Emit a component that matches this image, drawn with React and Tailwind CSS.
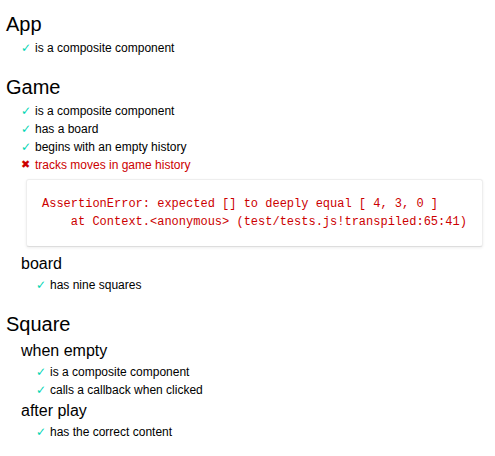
import React from "react";

const Pass = ({ children }) => (
  <li className="ml-[15px] overflow-hidden">
    <h2 className="text-[12px] leading-[18px] font-normal text-black flex">
      <span className="w-[9px] mr-[5px] text-[#00d6b2] text-[12px] font-['DejaVu_Sans',sans-serif]">✓</span>
      <span>{children}</span>
    </h2>
  </li>
);

const Fail = ({ children, error }) => (
  <li className="ml-[15px] overflow-hidden text-[#c00]">
    <h2 className="text-[12px] leading-[18px] font-normal flex">
      <span className="w-[9px] mr-[5px] text-[#c00] text-[11px] font-['DejaVu_Sans',sans-serif]">✖</span>
      <span>{children}</span>
    </h2>
    <pre className="float-left clear-left m-[5px] p-[15px] border border-[#eee] border-b-[#ddd] rounded-[3px] shadow-[0_1px_3px_#eee] bg-white text-[#c00] text-[12px] leading-[18px] font-['Liberation_Mono',monospace] whitespace-pre">
      {error}
    </pre>
  </li>
);

const Suite = ({ title, nested, first, children }) => (
  <li className={nested ? "ml-[15px]" : ""}>
    <h1
      className={
        nested
          ? "text-[16px] leading-[24px] font-normal text-black"
          : `${first ? "mt-[9px]" : "mt-[15px]"} text-[20px] leading-[30px] font-normal text-black`
      }
    >
      {title}
    </h1>
    <ul>{children}</ul>
  </li>
);

export default function App() {
  return (
    <div className="bg-white w-[495px] h-[456px] overflow-hidden font-['Liberation_Sans',Arial,sans-serif]">
      <ul className="pl-[6px]">
        <Suite title="App" first>
          <Pass>is a composite component</Pass>
        </Suite>
        <Suite title="Game">
          <Pass>is a composite component</Pass>
          <Pass>has a board</Pass>
          <Pass>begins with an empty history</Pass>
          <Fail
            error={
              "AssertionError: expected [] to deeply equal [ 4, 3, 0 ]\n    at Context.<anonymous> (test/tests.js!transpiled:65:41)"
            }
          >
            tracks moves in game history
          </Fail>
          <Suite title="board" nested>
            <Pass>has nine squares</Pass>
          </Suite>
        </Suite>
        <Suite title="Square">
          <Suite title="when empty" nested>
            <Pass>is a composite component</Pass>
            <Pass>calls a callback when clicked</Pass>
          </Suite>
          <Suite title="after play" nested>
            <Pass>has the correct content</Pass>
          </Suite>
        </Suite>
      </ul>
    </div>
  );
}
